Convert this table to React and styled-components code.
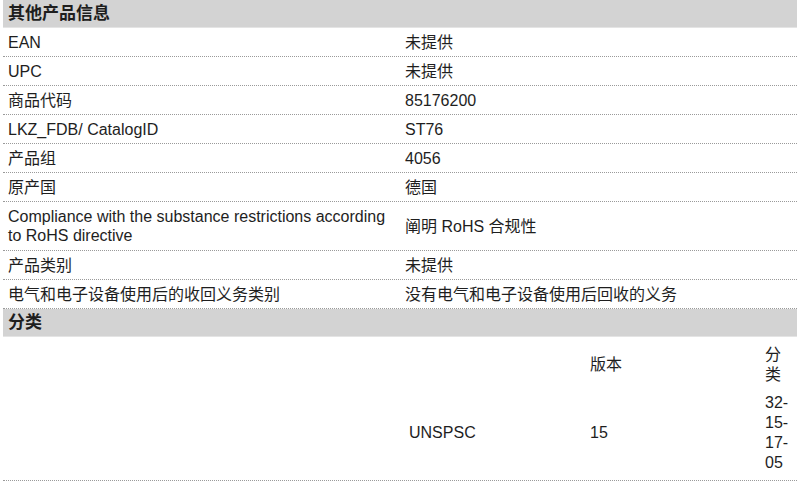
import React from 'react';
import styled, { createGlobalStyle } from 'styled-components';

const GlobalStyle = createGlobalStyle`
  body {
    margin: 0;
    background: #ffffff;
    font-family: 'Liberation Sans', 'Noto Sans CJK SC', sans-serif;
    color: #1e1e1e;
  }
`;

const Page = styled.div`
  padding: 0 3px;
  font-size: 16px;
`;

const SectionTitle = styled.h2`
  margin: 0;
  height: 27px;
  padding: 0 5px;
  background: #d3d3d3;
  border-bottom: 1px solid #e4e4e4;
  font-size: 17px;
  font-weight: bold;
  line-height: 28px;
`;

const Row = styled.div`
  display: grid;
  grid-template-columns: 1fr 1fr;
  border-bottom: 1px dotted #9a9a9a;
`;

const Cell = styled.div`
  padding: 5px 5px ${(p) => (p.tall ? '5px' : '4px')};
  line-height: 19px;
  display: flex;
  align-items: center;
`;

const SubTable = styled.div`
  display: grid;
  grid-template-columns: 181px 175px 1fr;
  align-items: center;
  margin-left: 3px;
  line-height: 20px;
`;

const SubCell = styled.div`
  padding: ${(p) => (p.head ? '8px 6px 4px' : '4px 6px 7px')};
  min-width: 0;
  word-break: ${(p) => (p.narrow ? 'break-all' : 'normal')};
  max-width: ${(p) => (p.narrow ? '30px' : 'none')};
`;

const info = [
  ['EAN', '未提供'],
  ['UPC', '未提供'],
  ['商品代码', '85176200'],
  ['LKZ_FDB/ CatalogID', 'ST76'],
  ['产品组', '4056'],
  ['原产国', '德国'],
  ['Compliance with the substance restrictions according to RoHS directive', '阐明 RoHS 合规性'],
  ['产品类别', '未提供'],
  ['电气和电子设备使用后的收回义务类别', '没有电气和电子设备使用后回收的义务'],
];

const App = () => (
  <Page>
    <GlobalStyle />
    <SectionTitle>其他产品信息</SectionTitle>
    {info.map(([label, value]) => {
      const tall = label.length > 40;
      return (
        <Row key={label}>
          <Cell tall={tall}>{label}</Cell>
          <Cell tall={tall}>{value}</Cell>
        </Row>
      );
    })}
    <SectionTitle>分类</SectionTitle>
    <Row>
      <div />
      <SubTable>
        <SubCell head />
        <SubCell head>版本</SubCell>
        <SubCell head narrow>分类</SubCell>
        <SubCell>UNSPSC</SubCell>
        <SubCell>15</SubCell>
        <SubCell narrow>
          32-<br />15-<br />17-<br />05
        </SubCell>
      </SubTable>
    </Row>
  </Page>
);

export default App;
